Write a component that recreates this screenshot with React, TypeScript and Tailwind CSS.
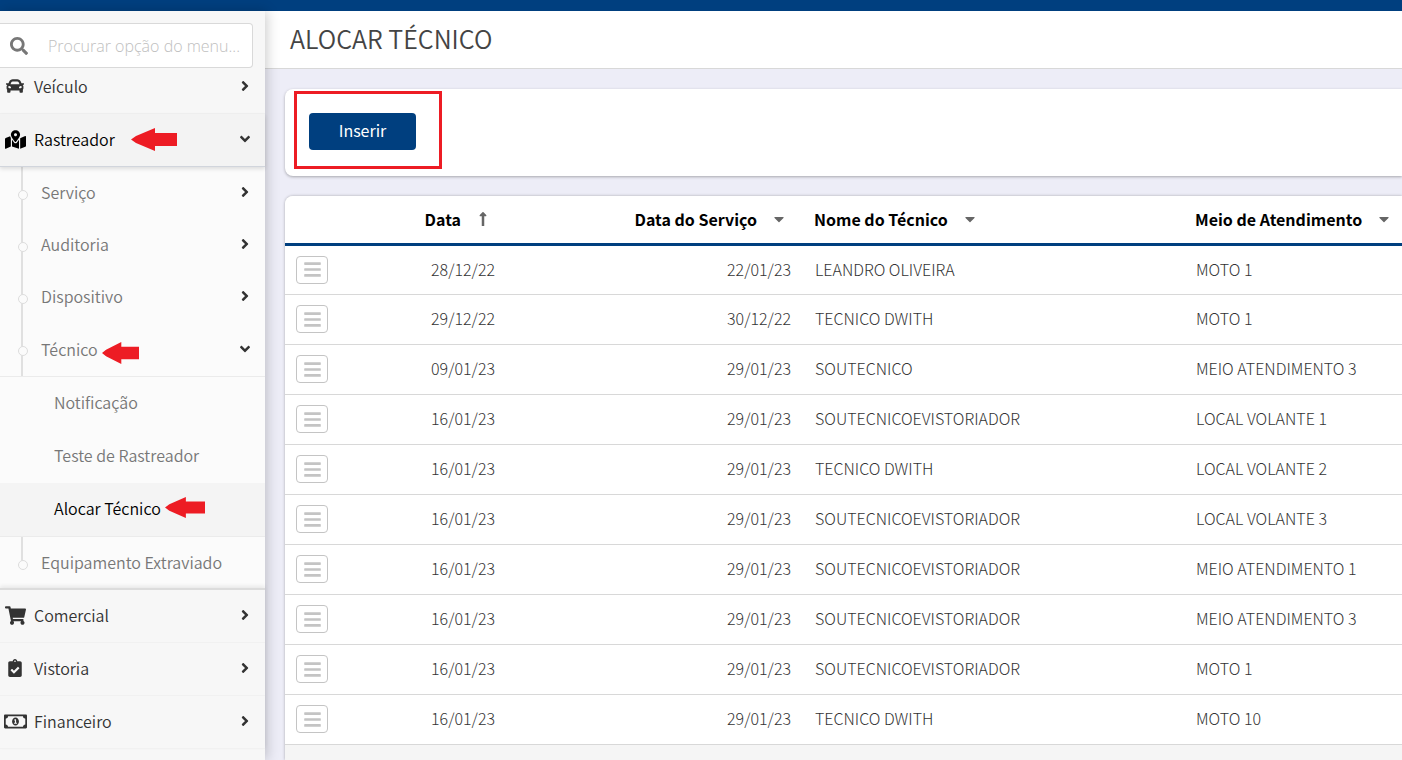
import React from "react";
import type { IconType } from "react-icons";
import {
  FaAngleDown,
  FaAngleRight,
  FaBars,
  FaCar,
  FaCaretDown,
  FaClipboardCheck,
  FaLongArrowAltUp,
  FaMapMarkedAlt,
  FaRegMoneyBillAlt,
  FaSearch,
  FaShoppingCart,
} from "react-icons/fa";

const rows = [
  ["28/12/22", "22/01/23", "LEANDRO OLIVEIRA", "MOTO 1"],
  ["29/12/22", "30/12/22", "TECNICO DWITH", "MOTO 1"],
  ["09/01/23", "29/01/23", "SOUTECNICO", "MEIO ATENDIMENTO 3"],
  ["16/01/23", "29/01/23", "SOUTECNICOEVISTORIADOR", "LOCAL VOLANTE 1"],
  ["16/01/23", "29/01/23", "TECNICO DWITH", "LOCAL VOLANTE 2"],
  ["16/01/23", "29/01/23", "SOUTECNICOEVISTORIADOR", "LOCAL VOLANTE 3"],
  ["16/01/23", "29/01/23", "SOUTECNICOEVISTORIADOR", "MEIO ATENDIMENTO 1"],
  ["16/01/23", "29/01/23", "SOUTECNICOEVISTORIADOR", "MEIO ATENDIMENTO 3"],
  ["16/01/23", "29/01/23", "SOUTECNICOEVISTORIADOR", "MOTO 1"],
  ["16/01/23", "29/01/23", "TECNICO DWITH", "MOTO 10"],
];

const RedArrow: React.FC<{ className: string }> = ({ className }) => (
  <svg
    className={`shrink-0 ${className}`}
    viewBox="0 0 46 23"
    preserveAspectRatio="none"
    fill="#ed1c24"
    aria-hidden="true"
  >
    <path d="M0 11.5 5 8 24 0V5H46V18H24V23L5 15Z" />
  </svg>
);

interface MenuItemProps {
  icon: IconType;
  iconClass?: string;
  label: string;
  open?: boolean;
}

const MenuItem: React.FC<MenuItemProps> = ({
  icon: Icon,
  iconClass = "text-lg",
  label,
  open,
}) => (
  <button
    className={`flex h-[53px] w-full items-center border-b pr-3 pb-0.5 text-left ${
      open
        ? "relative z-10 border-gray-300 bg-[#f3f3f3] text-black shadow-[0_2px_4px_rgba(0,0,0,0.12)]"
        : "border-[#f1f1f1] text-[#333]"
    }`}
  >
    <span className="flex w-[34px] shrink-0 justify-center pr-1">
      <Icon className={`shrink-0 ${iconClass}`} />
    </span>
    <span>{label}</span>
    {open && <RedArrow className="ml-4 h-[23px] w-[46px]" />}
    {open ? (
      <FaAngleDown className="ml-auto text-base text-[#333]" />
    ) : (
      <FaAngleRight className="ml-auto text-base text-[#333]" />
    )}
  </button>
);

const SubItem: React.FC<{ label: string; state?: "open" | "leaf" }> = ({
  label,
  state,
}) => (
  <button
    className={`relative flex w-full items-center pr-3 pb-0.5 pl-[41px] text-left text-[#777] ${
      state === "open" ? "h-[53px]" : state === "leaf" ? "h-[51px]" : "h-[52px]"
    }`}
  >
    {/* Timeline */}
    <span
      className={`absolute top-0 left-[21px] w-0.5 bg-[#e0e0e0] ${
        state === "leaf" ? "h-6" : "h-full"
      }`}
    ></span>
    <span className="absolute top-[23px] left-[18px] h-2.5 w-2.5 rounded-full border border-[#ddd] bg-[#fbfbfb]"></span>
    <span>{label}</span>
    {state === "open" && <RedArrow className="mt-2 ml-1 h-[22px] w-[37px]" />}
    {state === "open" && (
      <FaAngleDown className="ml-auto text-base text-[#333]" />
    )}
    {!state && <FaAngleRight className="ml-auto text-base text-[#333]" />}
  </button>
);

const Sidebar: React.FC = () => (
  <aside className="relative z-10 w-[265px] shrink-0 bg-[#f7f7f7] pt-3 shadow-[2px_0_12px_rgba(0,0,0,0.2)]">
    <label className="relative z-20 mr-3 flex h-[45px] items-center rounded-r border border-l-0 border-[#d9d9d9] bg-white">
      <FaSearch className="ml-2.5 shrink-0 text-lg text-[#777]" />
      <input
        type="text"
        aria-label="Procurar opção do menu"
        placeholder="Procurar opção do menu..."
        className="ml-5 w-full min-w-0 bg-transparent font-['Open_Sans',sans-serif] text-base font-light outline-none placeholder:text-[#c0c0c0]"
      />
    </label>

    <nav className="-mt-[7px] text-base font-[350]">
      <MenuItem icon={FaCar} label="Veículo" />
      <MenuItem
        icon={FaMapMarkedAlt}
        iconClass="text-[21px]"
        label="Rastreador"
        open
      />
      <div className="bg-[#fbfbfb]">
        <SubItem label="Serviço" />
        <SubItem label="Auditoria" />
        <SubItem label="Dispositivo" />
        <SubItem label="Técnico" state="open" />
        <div className="border-y border-[#ebebeb] text-[#777]">
          <a
            href="#notificacao"
            className="flex h-[53px] items-center pb-1 pl-[54px]"
          >
            Notificação
          </a>
          <a
            href="#teste"
            className="flex h-[53px] items-center pb-1 pl-[54px]"
          >
            Teste de Rastreador
          </a>
          <a
            href="#alocar"
            className="flex h-[53px] items-center bg-[#f4f4f4] pb-1 pl-[54px] text-black"
          >
            Alocar Técnico
            <RedArrow className="ml-1 h-[21px] w-10" />
          </a>
        </div>
        <SubItem label="Equipamento Extraviado" state="leaf" />
      </div>
      <div className="border-t-2 border-[#dcdcdc] shadow-[0_-2px_4px_rgba(0,0,0,0.08)]">
        <MenuItem
          icon={FaShoppingCart}
          iconClass="text-[21px]"
          label="Comercial"
        />
        <MenuItem icon={FaClipboardCheck} label="Vistoria" />
        <MenuItem
          icon={FaRegMoneyBillAlt}
          iconClass="text-[23px]"
          label="Financeiro"
        />
      </div>
    </nav>
  </aside>
);

const DataTable: React.FC = () => (
  <table className="w-full table-fixed border-collapse bg-white text-base font-light text-[#333]">
    <colgroup>
      <col className="w-[72px]" />
      <col className="w-[150px]" />
      <col className="w-[296px]" />
      <col className="w-[381px]" />
      <col />
    </colgroup>
    <thead>
      <tr className="h-12 border-b-3 border-[#003f7f] font-bold whitespace-nowrap text-black">
        <th aria-label="Ações"></th>
        <th>
          <span className="flex items-center justify-end gap-3.5 pr-4">
            Data
            <FaLongArrowAltUp className="text-base text-[#666]" />
          </span>
        </th>
        <th>
          <span className="flex items-center justify-end gap-3.5 pr-4">
            Data do Serviço
            <FaCaretDown className="text-base text-[#666]" />
          </span>
        </th>
        <th>
          <span className="flex items-center gap-3.5 pl-[11px]">
            Nome do Técnico
            <FaCaretDown className="text-base text-[#666]" />
          </span>
        </th>
        <th>
          <span className="flex items-center gap-3.5 pl-[11px]">
            Meio de Atendimento
            <FaCaretDown className="text-base text-[#666]" />
          </span>
        </th>
      </tr>
    </thead>
    <tbody>
      {rows.map(([date, serviceDate, name, place], index) => (
        <tr key={index} className="h-[50px] border-b border-[#d8d8d8]">
          <td className="pl-[11px]">
            <button
              aria-label="Opções"
              className="flex h-7 w-8 items-center justify-center rounded border border-[#c4c4c4] text-[#c4c4c4]"
            >
              <FaBars className="text-[19px]" />
            </button>
          </td>
          <td className="pr-3 pb-0.5 text-right">{date}</td>
          <td className="pr-3 pb-0.5 text-right">{serviceDate}</td>
          <td className="pb-0.5 pl-3">{name}</td>
          <td className="pb-0.5 pl-3">{place}</td>
        </tr>
      ))}
    </tbody>
  </table>
);

const App: React.FC = () => {
  return (
    <div className="flex min-h-screen flex-col overflow-hidden bg-[#ededf7] font-['Noto_Sans_CJK_SC',sans-serif]">
      <div className="h-[11px] bg-[#003f7f]"></div>
      <div className="flex flex-1">
        <Sidebar />
        <main className="flex min-w-0 flex-1 flex-col">
          <header className="flex h-[58px] items-center border-b border-[#d8d8d8] bg-white pb-0.5 pl-[25px]">
            <h1 className="text-[25px] font-[350] text-[#444]">
              ALOCAR TÉCNICO
            </h1>
          </header>
          <div className="flex flex-1 flex-col gap-5 pt-5 pl-5">
            <section className="relative rounded-l-lg bg-white px-6 pt-6 pb-[26px] shadow-[0_1px_3px_rgba(0,0,0,0.3)]">
              <button className="flex h-[37px] w-[107px] items-center justify-center rounded bg-[#003f7f] pb-1 text-base text-white">
                Inserir
              </button>
              {/* Highlight around the button */}
              <div className="pointer-events-none absolute top-0.5 left-[9px] h-[78px] w-[148px] border-3 border-[#ed1c24]"></div>
            </section>
            <section className="flex-1 overflow-hidden rounded-tl-lg bg-[#f5f5f5] shadow-[0_0_3px_rgba(0,0,0,0.3)]">
              <DataTable />
            </section>
          </div>
        </main>
      </div>
    </div>
  );
};

export default App;
